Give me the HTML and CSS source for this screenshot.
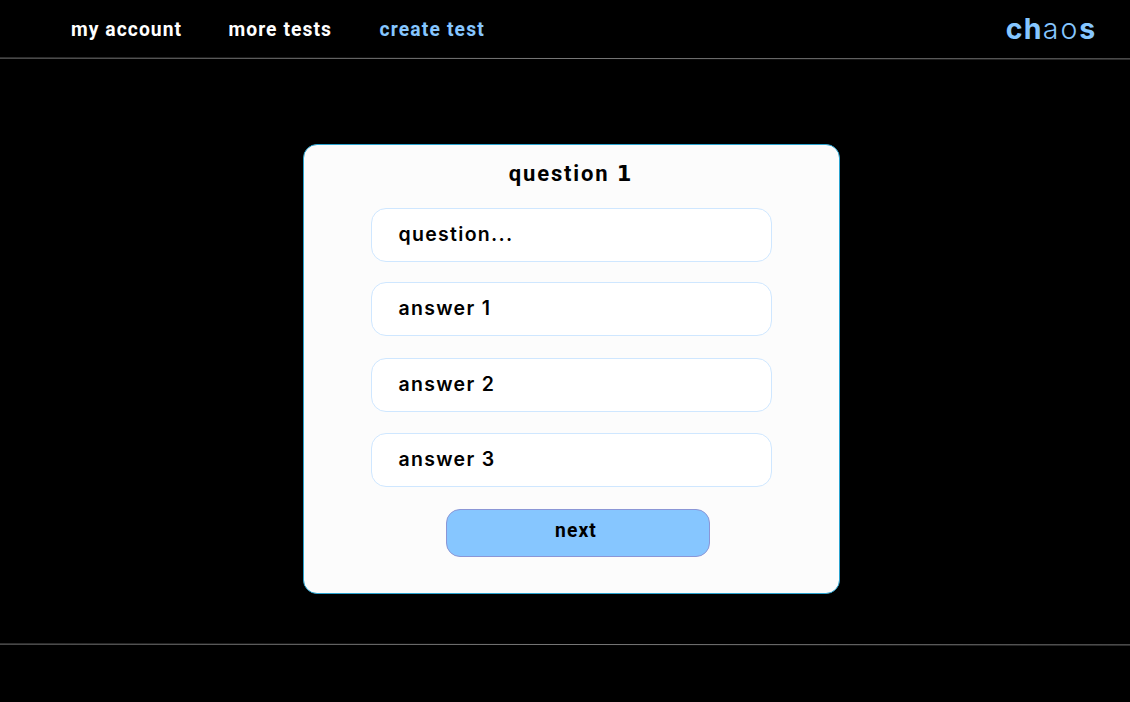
FILE: index.html
```html
<!DOCTYPE html>
<html lang="en">
<head>
<meta charset="utf-8">
<title>chaos</title>
<link rel="stylesheet" href="styles.css">
</head>
<body>
<header class="header">
  <nav class="nav">
    <a class="nav-link account">my account</a>
    <a class="nav-link tests">more tests</a>
    <a class="nav-link create">create test</a>
  </nav>
  <div class="logo"><b>ch</b><span>ao</span><b>s</b></div>
</header>
<svg class="rule" viewBox="0 0 1130 3"><path d="M0 1.1L1130 1.9"/></svg>
<main class="main">
  <form class="card">
    <h1 class="title">question <span class="digit">1</span></h1>
    <div class="fields">
      <div class="field">question...</div>
      <div class="field first-answer">answer 1</div>
      <div class="field">answer 2</div>
      <div class="field">answer 3</div>
    </div>
    <div class="next">next</div>
  </form>
</main>
<svg class="rule" viewBox="0 0 1130 3"><path d="M0 1.1L1130 1.9"/></svg>
</body>
</html>
```
FILE: styles.css
```css
* { box-sizing: border-box; }
body {
  margin: 0;
  height: 702px;
  overflow: hidden;
  background: #000;
  font-family: Roboto, sans-serif;
}
.header {
  height: 57px;
  padding: 0 33.5px 0 71px;
  display: flex;
  justify-content: space-between;
}
.nav {
  display: flex;
  padding-top: 16px;
}
.nav-link {
  font-size: 19.3px;
  line-height: 28px;
  font-weight: 700;
  letter-spacing: 1.05px;
  color: #fff;
  white-space: nowrap;
}
.account { width: 157.5px; }
.tests { width: 151px; }
.create {
  color: #86c6ff;
  letter-spacing: 1.15px;
}
.logo {
  font-family: Inter, sans-serif;
  font-size: 28.5px;
  line-height: 34px;
  padding-top: 12px;
  letter-spacing: 1.2px;
  color: #86c6ff;
}
.logo span {
  font-weight: 300;
  letter-spacing: 2px;
}
.rule {
  display: block;
  width: 1130px;
  height: 3px;
  fill: none;
  stroke: #777;
  stroke-width: 1;
}
.main {
  height: 583px;
  padding: 84px 0 0 303px;
}
.card {
  width: 537px;
  height: 450px;
  padding: 12px 67px 0;
  background: #fcfcfc;
  border: 1px solid #2aa3cf;
  border-radius: 14px;
}
.title {
  margin: 0;
  padding-right: 1px;
  font-size: 22px;
  line-height: 33px;
  font-weight: 700;
  letter-spacing: 1.85px;
  text-align: center;
}
.digit {
  font-family: "DejaVu Sans", sans-serif;
  font-size: 21px;
  line-height: 1;
}
.fields {
  display: flex;
  flex-direction: column;
  gap: 21px;
  margin-top: 18px;
}
.field {
  height: 54px;
  padding: 0 26.5px;
  background: #fff;
  border: 1px solid #cfe7ff;
  border-radius: 15px;
  font-family: Inter, sans-serif;
  font-size: 19.5px;
  line-height: 50px;
  font-weight: 600;
  letter-spacing: 1.3px;
}
.first-answer { margin: -1px 0 1px; }
.next {
  width: 264px;
  height: 48px;
  margin: 22px 0 0 75px;
  padding-right: 4px;
  background: #86c6ff;
  border: 1px solid #8b96d6;
  border-radius: 14px;
  font-size: 19.3px;
  line-height: 41px;
  font-weight: 700;
  letter-spacing: 1.1px;
  text-align: center;
}
```
